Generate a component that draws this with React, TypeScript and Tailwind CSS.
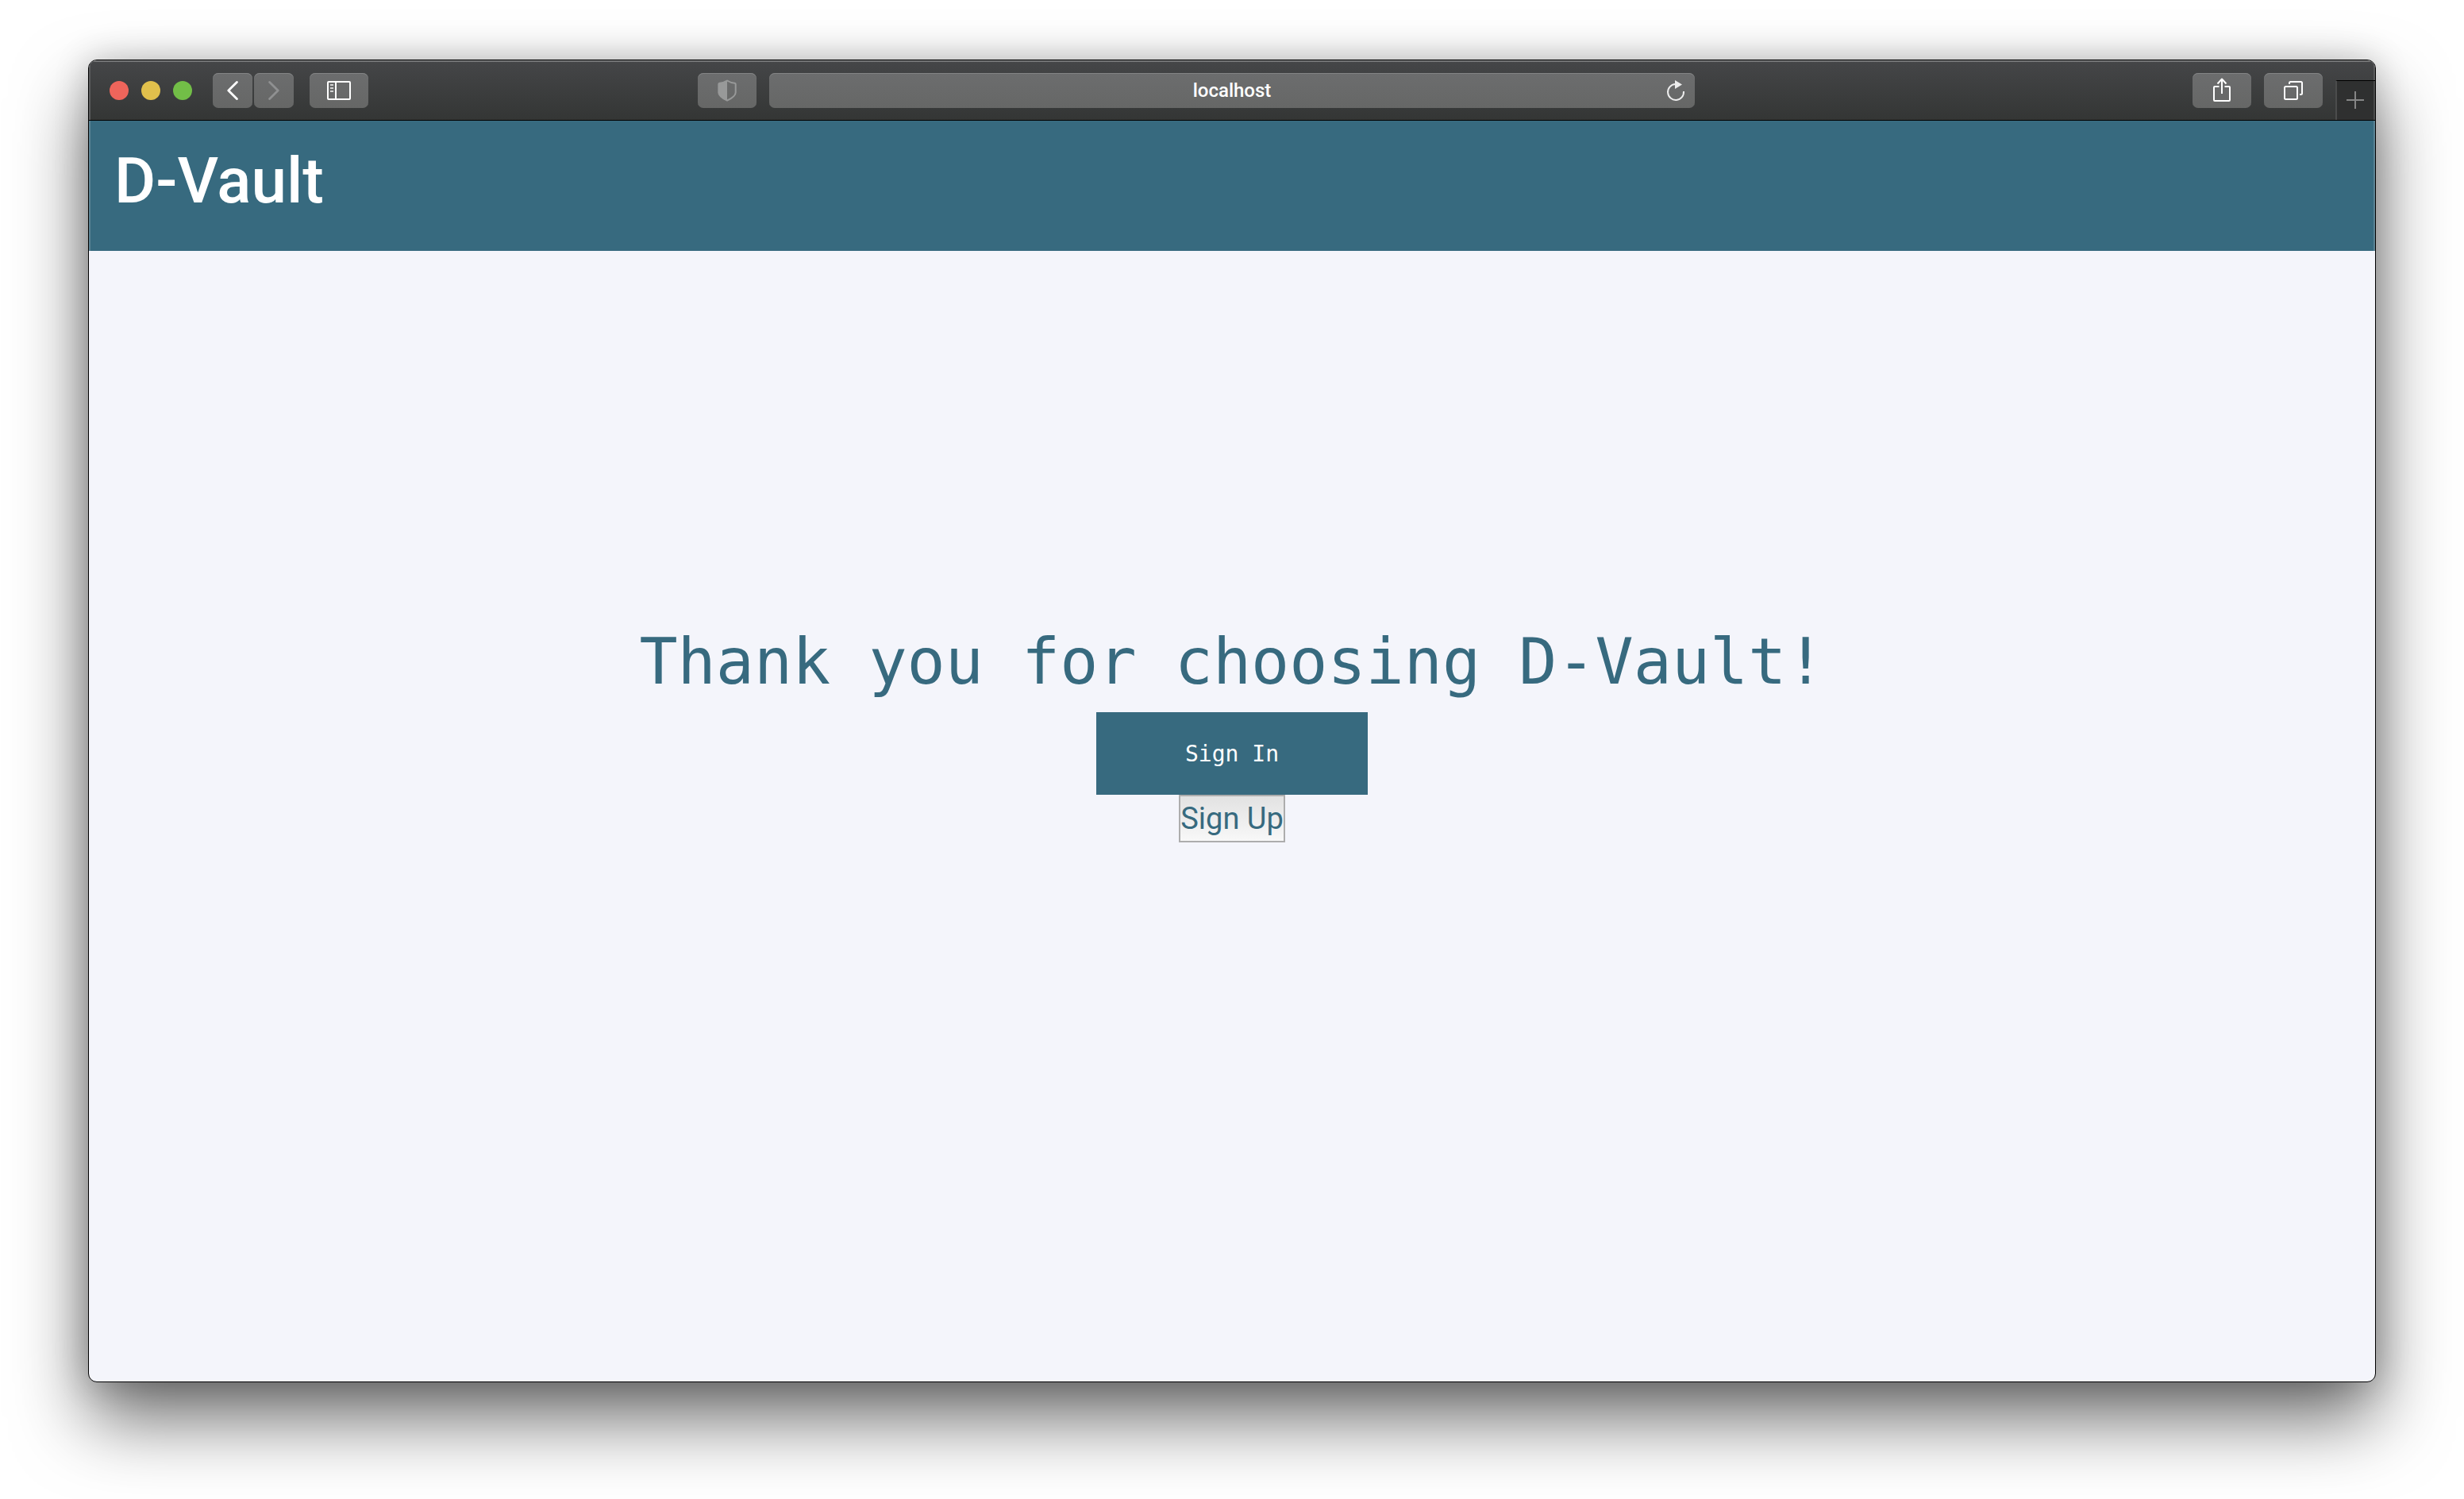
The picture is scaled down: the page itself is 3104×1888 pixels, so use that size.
import type { ReactNode } from 'react';

const controlFace =
  'flex h-11 items-center justify-center rounded-[7px] bg-linear-to-b from-[#6c6d6e] to-[#666766] shadow-[inset_0_1px_0_#838485]';

function ToolButton({ label, wide = true, children }: { label: string; wide?: boolean; children: ReactNode }) {
  return (
    <button type="button" aria-label={label} className={`${controlFace} shrink-0 ${wide ? 'w-[74px]' : 'w-[50px]'}`}>
      {children}
    </button>
  );
}

function Chevron({ forward = false }: { forward?: boolean }) {
  return (
    <svg
      width="14"
      height="24"
      viewBox="0 0 14 24"
      fill="none"
      strokeWidth="2.8"
      strokeLinecap="round"
      strokeLinejoin="round"
      className={forward ? 'stroke-[#8f9091]' : 'stroke-white'}
    >
      <path d={forward ? 'M1.6 1.6 12.2 12 1.6 22.4' : 'M12.4 1.6 1.8 12 12.4 22.4'} />
    </svg>
  );
}

function SidebarIcon() {
  return (
    <svg width="30" height="24" viewBox="0 0 30 24" fill="none">
      <rect x="1" y="1" width="28" height="22" rx="1" stroke="#fff" strokeWidth="2" />
      <path d="M11 1v22" stroke="#fff" strokeWidth="2" />
      <path d="M4 5h4M4 9h4M4 13h4" stroke="#d2d2d2" strokeWidth="2" />
    </svg>
  );
}

function ShieldIcon() {
  return (
    <svg width="24" height="28" viewBox="0 0 24 28" fill="none">
      <path
        d="M12 1.5C9 3.4 5.6 4.5 2.4 4.8 1.5 4.9 1.3 5.2 1.3 6v10.5c0 4.8 6.2 8 10.7 10.2 4.5-2.2 10.7-5.4 10.7-10.2V6c0-.8-.2-1.1-1.1-1.2C18.4 4.5 15 3.4 12 1.5Z"
        stroke="#989999"
        strokeWidth="2"
        strokeLinejoin="round"
      />
      <path d="M12 1.5C9 3.4 5.6 4.5 2.4 4.8 1.5 4.9 1.3 5.2 1.3 6v10.5c0 4.8 6.2 8 10.7 10.2Z" fill="#989999" />
    </svg>
  );
}

function ReloadIcon() {
  return (
    <svg width="24" height="28" viewBox="0 0 24 28" fill="none">
      <path d="M11.5 6A10 10 0 1 0 22 15" stroke="#ececec" strokeWidth="2" />
      <path d="M11 1 20 6.5 11 12Z" fill="#ececec" />
    </svg>
  );
}

function ShareIcon() {
  return (
    <svg width="22" height="32" viewBox="0 0 22 32" fill="none" stroke="#fff" strokeWidth="2" strokeLinejoin="round">
      <path d="M7.5 11H2a1 1 0 0 0-1 1v16a1 1 0 0 0 1 1h18a1 1 0 0 0 1-1V12a1 1 0 0 0-1-1h-5.5" />
      <path d="M11 20V1.5M5.5 7.5 11 1.5l5.5 6" />
    </svg>
  );
}

function TabsIcon() {
  return (
    <svg width="24" height="24" viewBox="0 0 24 24" fill="none" stroke="#fff" strokeWidth="2">
      <rect x="1" y="7" width="16" height="16" rx="1.5" />
      <path d="M7 4V2.5A1.5 1.5 0 0 1 8.5 1h13A1.5 1.5 0 0 1 23 2.5v13a1.5 1.5 0 0 1-1.5 1.5H20" />
    </svg>
  );
}

function Toolbar() {
  return (
    <div className="grid h-[76px] shrink-0 grid-cols-[857fr_1166fr_857fr] border-b border-black bg-linear-to-b from-[#454648] to-[#343635] shadow-[inset_0_2px_0_#747576,inset_2px_0_0_#5c5d5e,inset_-2px_0_0_#5c5d5e]">
      <div className="flex items-center pr-4 pl-[26px]">
        <div className="flex gap-4">
          <button type="button" aria-label="Close" className="size-6 rounded-full bg-[#ee655b]" />
          <button type="button" aria-label="Minimize" className="size-6 rounded-full bg-[#e1c04c]" />
          <button type="button" aria-label="Zoom" className="size-6 rounded-full bg-[#72be47]" />
        </div>
        <div className="mr-5 ml-[26px] flex gap-0.5">
          <ToolButton label="Back" wide={false}>
            <Chevron />
          </ToolButton>
          <ToolButton label="Forward" wide={false}>
            <Chevron forward />
          </ToolButton>
        </div>
        <ToolButton label="Show sidebar">
          <SidebarIcon />
        </ToolButton>
        <div className="ml-auto">
          <ToolButton label="Privacy report">
            <ShieldIcon />
          </ToolButton>
        </div>
      </div>

      <div className="flex items-center">
        <div className={`${controlFace} relative w-full`}>
          <input
            aria-label="Address"
            defaultValue="localhost"
            className="w-full bg-transparent px-12 text-center font-['Roboto',sans-serif] text-2xl font-medium text-white outline-none"
          />
          <button type="button" aria-label="Reload" className="absolute right-3">
            <ReloadIcon />
          </button>
        </div>
      </div>

      <div className="flex items-center justify-end gap-4">
        <ToolButton label="Share">
          <ShareIcon />
        </ToolButton>
        <ToolButton label="Tab overview">
          <TabsIcon />
        </ToolButton>
        <button
          type="button"
          aria-label="New tab"
          className="flex h-[50px] w-[50px] items-center justify-center self-end border-t border-l-2 border-t-black border-l-[#4b4c4c] bg-[#2f3030] pr-0.5 pb-0.5 shadow-[inset_-2px_0_0_#4b4c4c]"
        >
          <svg width="22" height="22" viewBox="0 0 22 22" stroke="#868686" strokeWidth="2">
            <path d="M11 0v22M0 11h22" />
          </svg>
        </button>
      </div>
    </div>
  );
}

export default function App() {
  return (
    <div className="flex min-h-screen bg-white px-[111px] pt-[75px] pb-[147px]">
      <div className="flex grow flex-col overflow-hidden rounded-[11px] border border-black bg-[#f4f5fb] shadow-[0_46px_92px_rgba(0,0,0,0.58),0_0_44px_rgba(0,0,0,0.2)]">
        <Toolbar />
        <header className="bg-[#376a7f] px-8 pt-7 pb-10 shadow-[inset_2px_0_0_#5b8495,inset_-2px_0_0_#5b8495]">
          <h1 className="font-['Roboto',sans-serif] text-[80px] leading-[96px] font-medium text-white">D-Vault</h1>
        </header>
        <main className="flex grow flex-col items-center pt-[470px]">
          <h2 className="mb-4 font-['DejaVu_Sans_Mono',monospace] text-[80px] leading-[95px] text-[#376a7f]">
            Thank you for choosing D-Vault!
          </h2>
          <button
            type="button"
            className="h-[104px] w-[342px] bg-[#376a7f] pt-0.5 font-['DejaVu_Sans_Mono',monospace] text-[28px] text-white"
          >
            Sign In
          </button>
          <button
            type="button"
            className="flex h-[60px] items-center justify-center border-2 border-[#adadad] bg-linear-to-b from-[#e2e2e2] to-[#f8f8f8] font-['Roboto',sans-serif] text-[38px] text-[#376a7f]"
          >
            Sign Up
          </button>
        </main>
      </div>
    </div>
  );
}
